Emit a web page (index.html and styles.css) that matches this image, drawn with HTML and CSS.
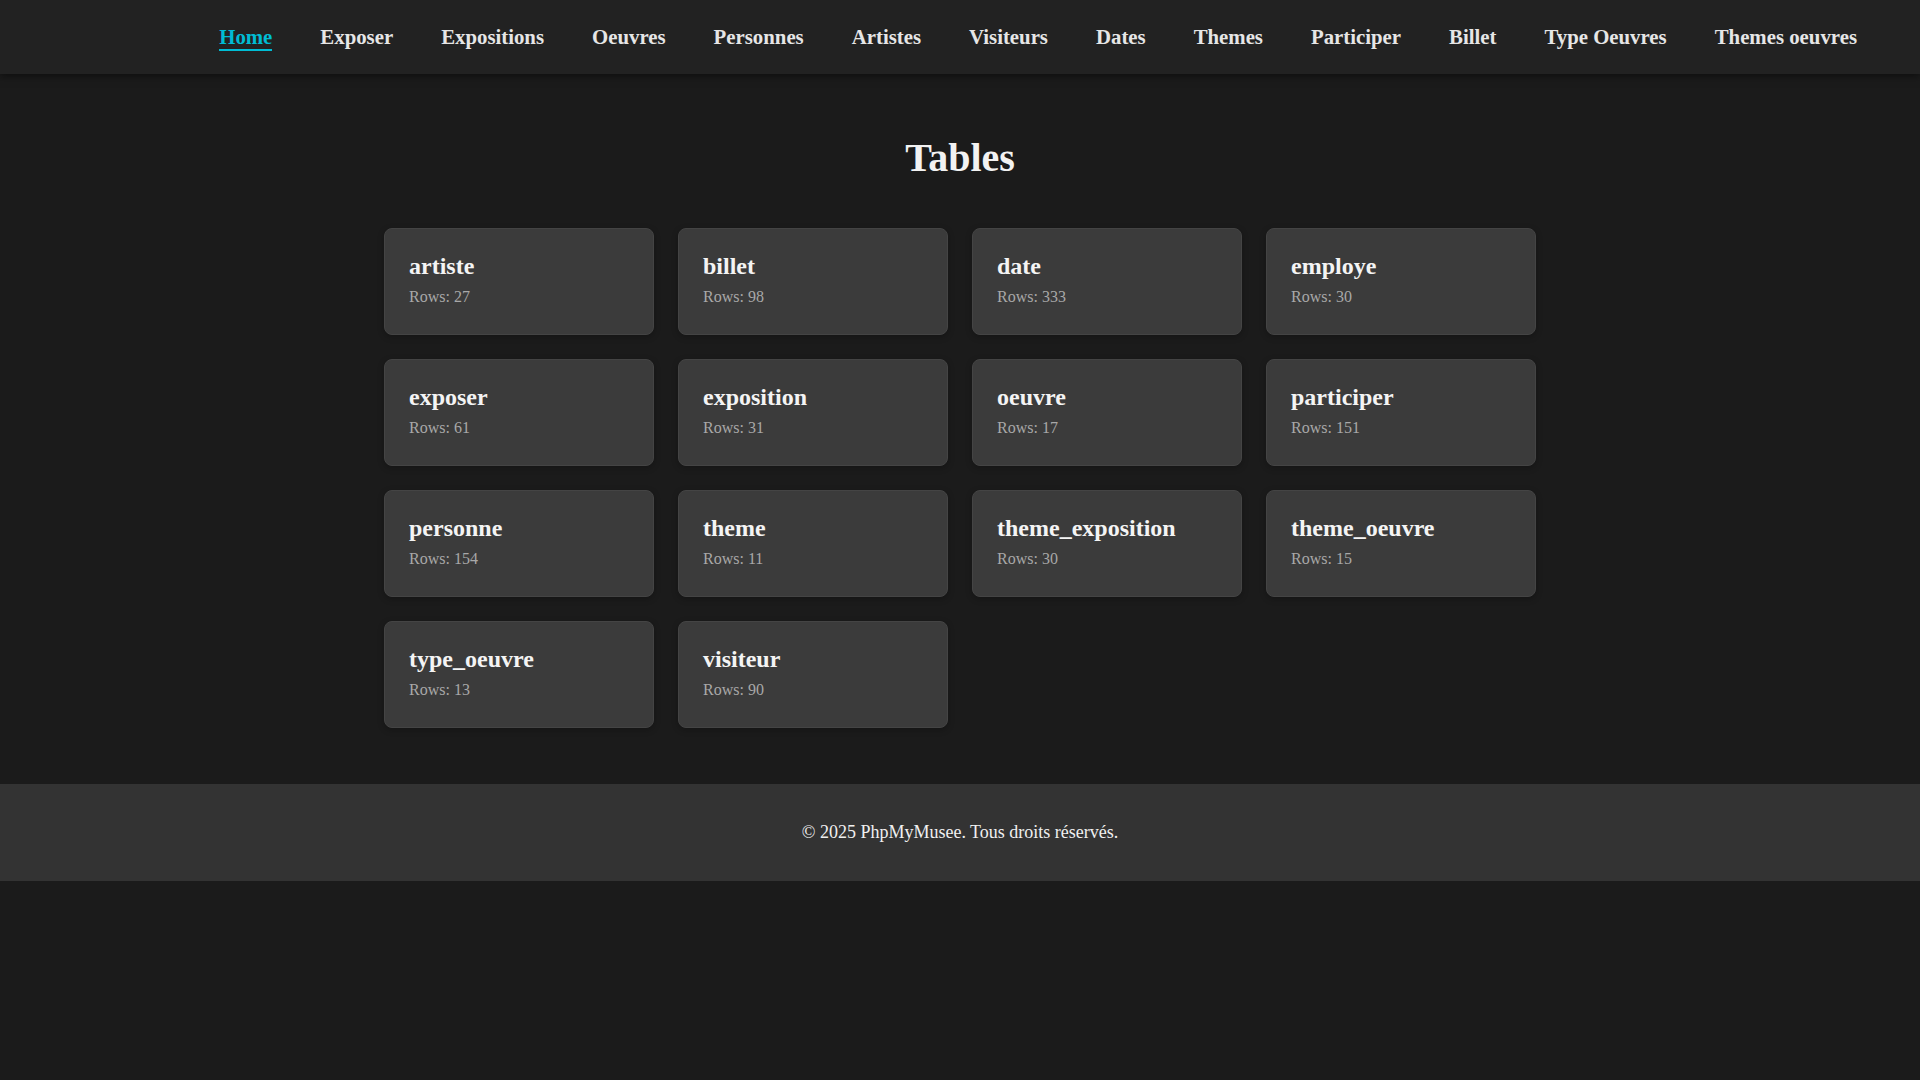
FILE: index.html
```html
<!DOCTYPE html>
<html lang="fr">
<head>
<meta charset="utf-8">
<title>PhpMyMusee</title>
<link rel="stylesheet" href="styles.css">
</head>
<body>
<nav class="topnav">
  <ul class="nav-list">
    <li><a class="nav-link active" href="#">Home</a></li>
    <li><a class="nav-link" href="#">Exposer</a></li>
    <li><a class="nav-link" href="#">Expositions</a></li>
    <li><a class="nav-link" href="#">Oeuvres</a></li>
    <li><a class="nav-link" href="#">Personnes</a></li>
    <li><a class="nav-link" href="#">Artistes</a></li>
    <li><a class="nav-link" href="#">Visiteurs</a></li>
    <li><a class="nav-link" href="#">Dates</a></li>
    <li><a class="nav-link" href="#">Themes</a></li>
    <li><a class="nav-link" href="#">Participer</a></li>
    <li><a class="nav-link" href="#">Billet</a></li>
    <li><a class="nav-link" href="#">Type Oeuvres</a></li>
    <li><a class="nav-link" href="#">Themes oeuvres</a></li>
  </ul>
</nav>
<main class="content">
  <h1 class="page-title">Tables</h1>
  <div class="table-grid">
    <div class="table-card"><h3 class="card-title">artiste</h3><p class="card-rows">Rows: 27</p></div>
    <div class="table-card"><h3 class="card-title">billet</h3><p class="card-rows">Rows: 98</p></div>
    <div class="table-card"><h3 class="card-title">date</h3><p class="card-rows">Rows: 333</p></div>
    <div class="table-card"><h3 class="card-title">employe</h3><p class="card-rows">Rows: 30</p></div>
    <div class="table-card"><h3 class="card-title">exposer</h3><p class="card-rows">Rows: 61</p></div>
    <div class="table-card"><h3 class="card-title">exposition</h3><p class="card-rows">Rows: 31</p></div>
    <div class="table-card"><h3 class="card-title">oeuvre</h3><p class="card-rows">Rows: 17</p></div>
    <div class="table-card"><h3 class="card-title">participer</h3><p class="card-rows">Rows: 151</p></div>
    <div class="table-card"><h3 class="card-title">personne</h3><p class="card-rows">Rows: 154</p></div>
    <div class="table-card"><h3 class="card-title">theme</h3><p class="card-rows">Rows: 11</p></div>
    <div class="table-card"><h3 class="card-title">theme_exposition</h3><p class="card-rows">Rows: 30</p></div>
    <div class="table-card"><h3 class="card-title">theme_oeuvre</h3><p class="card-rows">Rows: 15</p></div>
    <div class="table-card"><h3 class="card-title">type_oeuvre</h3><p class="card-rows">Rows: 13</p></div>
    <div class="table-card"><h3 class="card-title">visiteur</h3><p class="card-rows">Rows: 90</p></div>
  </div>
</main>
<footer class="site-footer">
  <p class="footer-text">© 2025 PhpMyMusee. Tous droits réservés.</p>
</footer>
</body>
</html>
```
FILE: styles.css
```css
html, body {
  margin: 0;
  padding: 0;
  background: #1b1b1b;
  color: #f0f0f0;
  font-family: "Liberation Serif", "Times New Roman", serif;
}

.topnav {
  background: #222222;
  padding: 25px 63px 23px 0;
  box-shadow: 0 2px 8px rgba(0, 0, 0, 0.5);
  position: relative;
  z-index: 1;
}

.nav-list {
  list-style: none;
  margin: 0;
  padding: 0;
  display: flex;
  justify-content: flex-end;
  gap: 48px;
}

.nav-link {
  display: block;
  color: #e6e6e6;
  text-decoration: none;
  font-weight: bold;
  font-size: 20.8px;
  border-bottom: 2px solid transparent;
}

.nav-link.active {
  color: #00bcd4;
  border-bottom-color: #00bcd4;
}

.content {
  padding: 60px 0 56px;
}

.page-title {
  margin: 0 0 47px;
  text-align: center;
  font-size: 40px;
  font-weight: bold;
  color: #f2f2f2;
}

.table-grid {
  width: 1152px;
  margin: 0 auto;
  display: grid;
  grid-template-columns: repeat(4, 1fr);
  gap: 24px;
}

.table-card {
  background: #3b3b3b;
  border: 1px solid #444444;
  border-radius: 8px;
  padding: 24px 24px 28px;
  box-shadow: 0 2px 6px rgba(0, 0, 0, 0.25);
}

.card-title {
  margin: 0 0 8px;
  font-size: 24px;
  font-weight: bold;
  color: #f4f4f4;
}

.card-rows {
  margin: 0;
  font-size: 16px;
  color: #a8a8a8;
}

.site-footer {
  background: #333333;
  padding: 20px;
  text-align: center;
}

.footer-text {
  margin: 18px 0;
  font-size: 18px;
  color: #f0f0f0;
}
```
